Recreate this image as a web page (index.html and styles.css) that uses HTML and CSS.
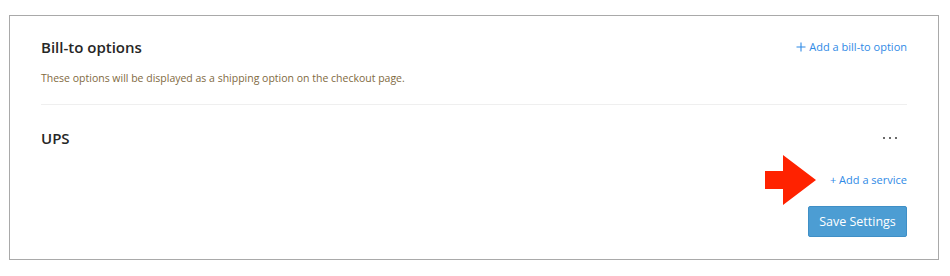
FILE: index.html
```html
<!DOCTYPE html>
<html>
<head>
<meta charset="utf-8">
<link rel="stylesheet" href="styles.css">
</head>
<body>
<div class="panel">
  <div class="head-row">
    <h2 class="title">Bill-to options</h2>
    <a class="link link-add" href="#"><svg class="plus" width="10" height="10" viewBox="0 0 10 10"><path d="M5 0.5V9.5M0.5 5H9.5" stroke="#2f8ae6" stroke-width="1.1" fill="none"/></svg>Add a bill-to option</a>
  </div>
  <p class="desc">These options will be displayed as a shipping option on the checkout page.</p>
  <div class="divider"></div>
  <div class="carrier-row">
    <h3 class="title">UPS</h3>
    <span class="more"><i></i><i></i><i></i></span>
  </div>
  <div class="service-row">
    <a class="link link-service" href="#">+ Add a service</a>
  </div>
  <div class="actions">
    <button class="btn">Save Settings</button>
  </div>
  <svg class="arrow" width="52" height="52" viewBox="0 0 52 52">
    <polygon points="0,16 18,16 18,0 51,25 18,50 18,34 0,34" fill="#ff2200"/>
  </svg>
</div>
</body>
</html>
```
FILE: styles.css
```css
* { box-sizing: border-box; }
html, body { margin: 0; padding: 0; background: #fff; }
body { font-family: "Open Sans", "Liberation Sans", sans-serif; color: #222; }

.panel {
  position: relative;
  margin: 15px 0 0 9px;
  width: 930px;
  height: 245px;
  border: 1px solid #a9a9a9;
  padding: 21px 31px 0 31px;
}

.head-row, .carrier-row {
  display: flex;
  justify-content: space-between;
  align-items: center;
  height: 20px;
}

.title {
  margin: 0;
  font-size: 15px;
  font-weight: 600;
  line-height: 20px;
  color: #262626;
}

.link {
  color: #2f8ae6;
  text-decoration: none;
  font-size: 11px;
  line-height: 16px;
}
.link-add { display: flex; align-items: center; gap: 3px; }
.link-add .plus { display: block; }

.desc {
  margin: 14px 0 0;
  font-size: 10.5px;
  line-height: 14px;
  color: #7f6a3f;
}

.divider {
  margin-top: 19px;
  height: 1px;
  background: #efefef;
}

.carrier-row { margin-top: 23px; }

.more { display: flex; gap: 4px; margin-right: 10px; align-items: center; }
.more i { display: block; width: 2px; height: 2px; background: #6a6a6a; }

.service-row {
  margin-top: 24px;
  display: flex;
  justify-content: flex-end;
  height: 16px;
}

.actions {
  margin-top: 18px;
  display: flex;
  justify-content: flex-end;
}

.btn {
  width: 99px;
  height: 31px;
  background: #4c9dd3;
  border: 1px solid #3f8fc6;
  border-radius: 2px;
  color: #fff;
  font-family: "Open Sans", "Liberation Sans", sans-serif;
  font-size: 12.5px;
  font-weight: 500;
  padding: 0;
}

.arrow {
  position: absolute;
  left: 755px;
  top: 139px;
}
```
